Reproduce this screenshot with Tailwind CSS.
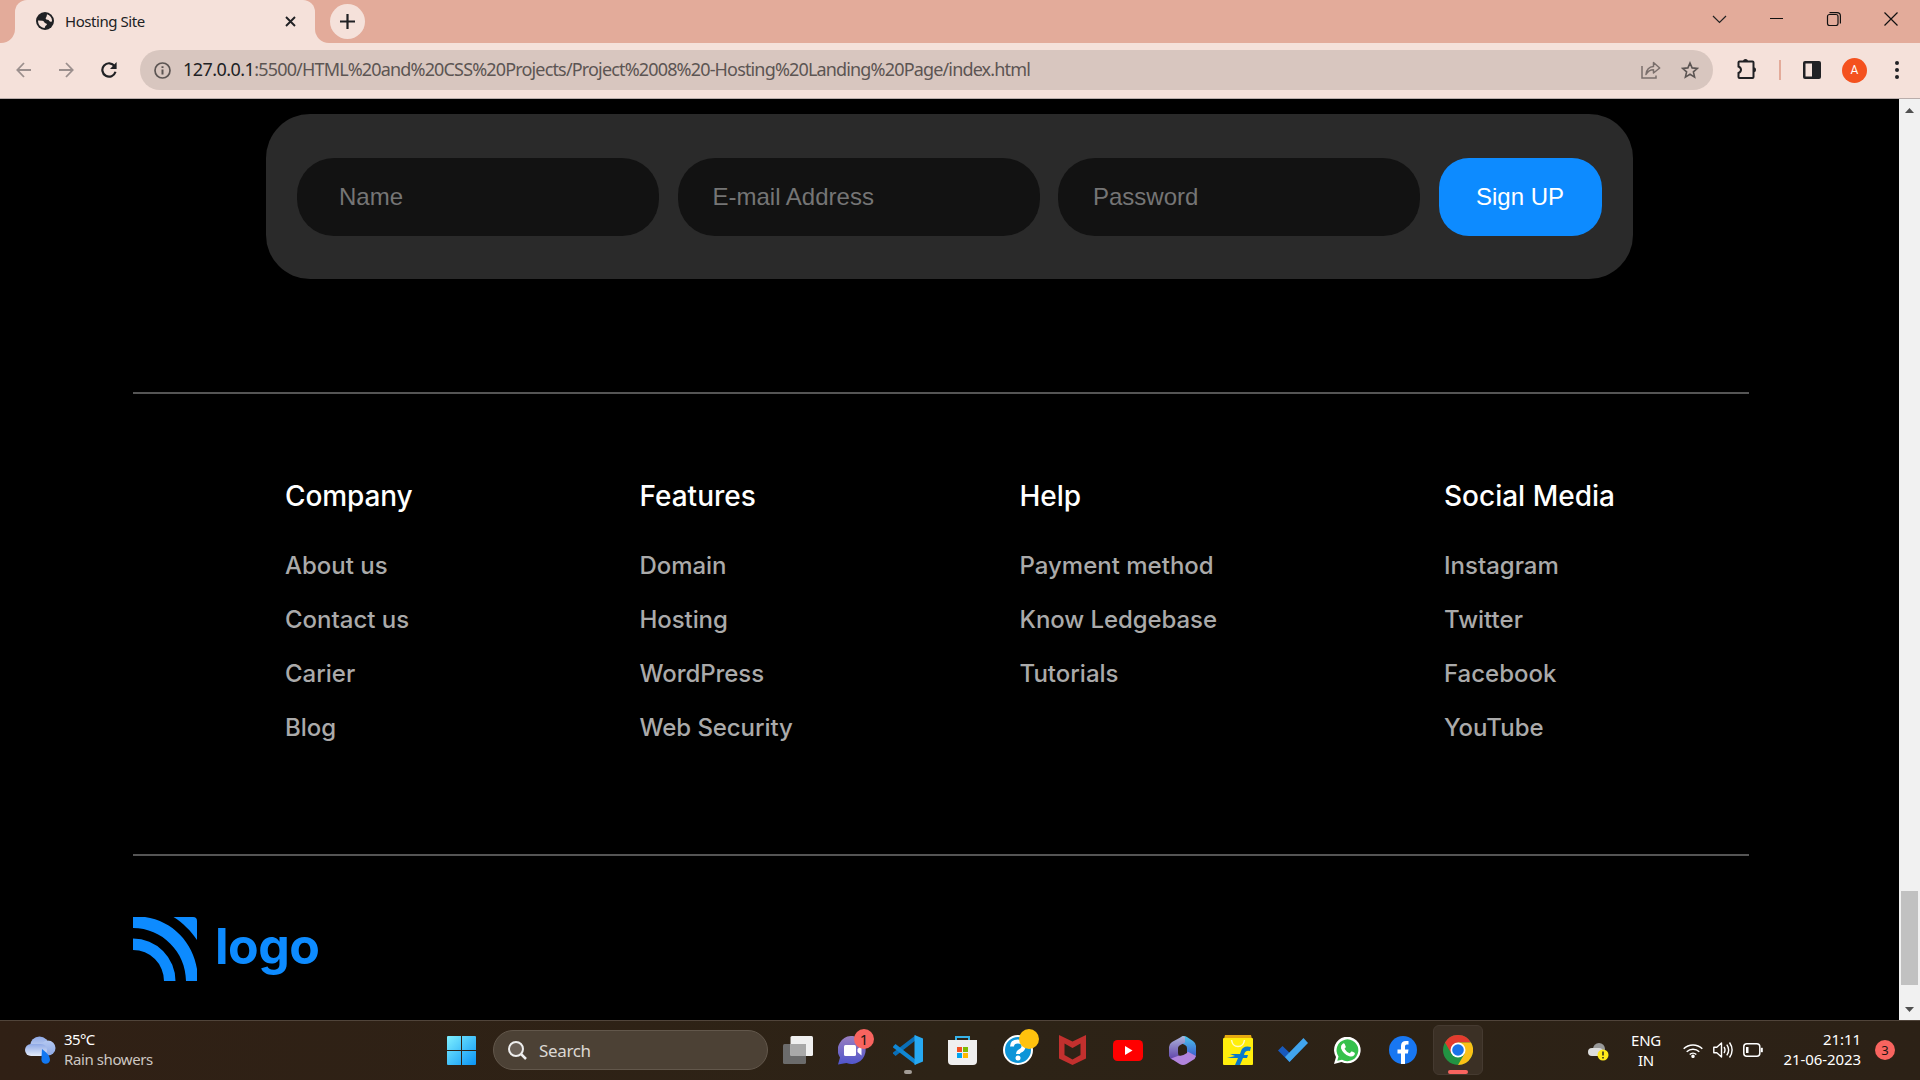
<!DOCTYPE html>
<html lang="en">
<head>
<meta charset="utf-8">
<title>Hosting Site</title>
<script src="https://cdn.jsdelivr.net/npm/@tailwindcss/browser@4"></script>
</head>
<body class="w-[1920px] h-[1080px] overflow-hidden bg-black flex flex-col font-['Noto_Sans',sans-serif]">

<!-- Tab strip -->
<header class="h-[43px] shrink-0 bg-[#e3ab9a] flex items-start">
  <div class="w-[15px] h-[43px] bg-[#f5e1da] shrink-0"><div class="size-full bg-[#e3ab9a] rounded-br-[14px]"></div></div>
  <div class="w-[300px] h-[43px] bg-[#f5e1da] rounded-t-[12px] flex items-center pl-[21px] pr-[19px] shrink-0">
    <svg class="size-[18px] -mt-px" viewBox="0 0 18 18"><circle cx="9" cy="9" r="9" fill="#202124"/><path d="M11 2.200C14 3 16 5.800 16 8.500C16 9.600 15.600 10 14.500 9.800C12.800 9.500 13.500 8 11.500 7.800C9.800 7.700 9.300 6.700 10 5.500C10.600 4.600 10.800 3.800 11 2.200Z" fill="#f5e1da"/><path d="M2 8.500L6.500 8.800C8.500 9 8 10.800 9.500 11.200C11.500 11.500 11.200 13 10 13.500C8.800 14 9.500 15.200 8.500 15.900C4.800 15.700 2 12.700 2 8.500Z" fill="#f5e1da"/></svg>
    <span class="ml-[11px] -mt-px text-[15px] tracking-[-0.450px] text-[#202124] whitespace-nowrap">Hosting Site</span>
    <svg class="ml-auto -mt-px size-[11px]" viewBox="0 0 11 11" stroke="#202124" stroke-width="1.900"><path d="M1 1l9 9M10 1l-9 9"/></svg>
  </div>
  <div class="w-[15px] h-[43px] bg-[#f5e1da] shrink-0"><div class="size-full bg-[#e3ab9a] rounded-bl-[14px]"></div></div>
  <div class="size-[35px] mt-1 rounded-full bg-[#f5e1da] flex items-center justify-center shrink-0">
    <svg class="size-[15px]" viewBox="0 0 15 15" stroke="#202124" stroke-width="2.200"><path d="M7.500 0v15M0 7.500h15"/></svg>
  </div>
  <div class="ml-auto mr-px flex h-[37px] items-center">
    <svg class="w-[57px] h-[14px]" viewBox="0 0 57 14" fill="none" stroke="#222" stroke-width="1.200"><path d="M22 4l6.500 6.500L35 4"/></svg>
    <svg class="w-[57px] h-[14px]" viewBox="0 0 57 14" fill="none" stroke="#111" stroke-width="1"><path d="M22 6.500h13"/></svg>
    <svg class="w-[57px] h-[14px]" viewBox="0 0 57 14" fill="none" stroke="#111" stroke-width="1.200"><rect x="22.500" y="2.500" width="10.500" height="11" rx="2"/><path d="M24.500 .6h7.500q3.400 0 3.400 3.400v7.500"/></svg>
    <svg class="w-[57px] h-[14px]" viewBox="0 0 57 14" fill="none" stroke="#111" stroke-width="1.200"><path d="M22.500 .5l13 13M35.500 .5l-13 13"/></svg>
  </div>
</header>

<!-- Toolbar -->
<nav class="h-[56px] shrink-0 bg-[#f5e1da] border-b border-[#b9adab] flex items-center pl-[16px] pb-px">
  <svg class="w-[15px] h-4" viewBox="0 0 15 16" fill="none" stroke="#9b8f8d" stroke-width="1.800"><path d="M15 8H1.500M8 1L1.300 8L8 15"/></svg>
  <svg class="w-[15px] h-4 ml-[28px]" viewBox="0 0 15 16" fill="none" stroke="#9b8f8d" stroke-width="1.800"><path d="M0 8h13.500M7 1l6.700 7L7 15"/></svg>
  <svg class="size-4 ml-[27px]" viewBox="0 0 16 16" fill="none" stroke="#202124" stroke-width="2.200"><path d="M13.600 4.200A6.700 6.700 0 1 0 14.500 9.800"/><path d="M15.600 0v7H9z" fill="#202124" stroke="none"/></svg>
  <div class="ml-[23px] w-[1573px] h-10 rounded-full bg-[#d8c6bf] flex items-center pl-[14px] pr-[14px]">
    <svg class="size-[17px]" viewBox="0 0 17 17" fill="none" stroke="#5c5553" stroke-width="1.700"><circle cx="8.500" cy="8.500" r="7.500"/><path d="M8.500 7.500v5M8.500 4.200v1.800" stroke-width="2"/></svg>
    <p class="ml-3 -mt-px text-[18px] tracking-[-0.840px] whitespace-nowrap text-[#5c5553]"><span class="text-[#202124] tracking-[-0.550px]">127.0.0.1</span>:5500/HTML%20and%20CSS%20Projects/Project%2008%20-Hosting%20Landing%20Page/index.html</p>
    <svg class="ml-auto w-5 h-[18px]" viewBox="0 0 20 18" fill="none" stroke="#7a6f6c" stroke-width="1.500"><path d="M1 5v12h14v-2.500"/><path d="M5 13.500C5.500 8.500 8 5.800 12.500 5.500V1.500L18.700 7L12.500 12V8.800C9 8.800 7 10 5 13.500Z" stroke-linejoin="round"/></svg>
    <svg class="ml-5 size-[18px]" viewBox="0 0 18 18" fill="none" stroke="#5c5553" stroke-width="1.600"><path d="M9 2l2.100 4.900 5.300.5-4 3.500 1.200 5.200L9 13.300l-4.600 2.800 1.200-5.200-4-3.500 5.300-.5z"/></svg>
  </div>
  <svg class="ml-[23px] mt-[-2px] w-[22px] h-5" viewBox="0 0 22 20" fill="none" stroke="#202124" stroke-width="2"><path d="M3.500 2.500h13q1 0 1 1v14.500q0 1-1 1h-13q-1 0-1-1v-4q2.500-1 2.500-3.200t-2.500-3.300v-4q0-1 1-1z"/><path d="M7 2.500a2.500 2.500 0 0 1 5 0zM17.500 8.300a2.500 2.500 0 0 1 0 5z" fill="#202124" stroke="none"/></svg>
  <div class="ml-[21px] w-0.5 h-5 bg-[#e3ab9a]"></div>
  <svg class="ml-[22px] size-[18px]" viewBox="0 0 18 18"><rect width="18" height="18" rx="2" fill="#202124"/><path d="M2.500 2.500h6.500v13H2.500z" fill="#f5e1da"/></svg>
  <div class="ml-[21px] size-[25px] rounded-full bg-[#f4511e] text-white text-[12px] flex items-center justify-center font-['Roboto',sans-serif]">A</div>
  <svg class="ml-7 w-1 h-[18px]" viewBox="0 0 4 18" fill="#202124"><circle cx="2" cy="2" r="2"/><circle cx="2" cy="9" r="2"/><circle cx="2" cy="16" r="2"/></svg>
</nav>

<div class="flex h-[921px] shrink-0">
  <!-- Page -->
  <main class="w-[1899px] bg-black pt-[15px] font-['Inter',sans-serif]">
    <form class="ml-[266px] w-[1367px] h-[165px] rounded-[44px] bg-[#2a2a2a] pl-[31px] pt-px flex items-center gap-[18.500px] font-['Liberation_Sans',sans-serif] text-[24px]">
      <div class="w-[362px] h-[78px] rounded-[37px] bg-[#121212] text-[#757575] flex items-center pl-[42px]">Name</div>
      <div class="w-[362px] h-[78px] rounded-[37px] bg-[#121212] text-[#757575] flex items-center pl-[35px]">E-mail Address</div>
      <div class="w-[362px] h-[78px] rounded-[37px] bg-[#121212] text-[#757575] flex items-center pl-[35px]">Password</div>
      <button type="button" class="w-[163px] h-[78px] rounded-[30px] bg-[#0d8bff] text-white">Sign UP</button>
    </form>

    <section class="ml-[133px] w-[1616px] mt-[113px] h-[464px] border-y-2 border-[#555] pt-[78px] pl-[152px] grid grid-cols-[354.500px_380px_424.500px_1fr] items-start text-[24px] font-medium text-[#aaa]">
      <div>
        <h3 class="text-[28px] leading-[48px] mb-[19px] text-white tracking-[-0.100px]">Company</h3>
        <ul class="leading-[54px]"><li>About us</li><li>Contact us</li><li>Carier</li><li>Blog</li></ul>
      </div>
      <div>
        <h3 class="text-[28px] leading-[48px] mb-[19px] text-white">Features</h3>
        <ul class="leading-[54px] tracking-[-0.080px]"><li>Domain</li><li>Hosting</li><li>WordPress</li><li>Web Security</li></ul>
      </div>
      <div>
        <h3 class="text-[28px] leading-[48px] mb-[19px] text-white">Help</h3>
        <ul class="leading-[54px]"><li>Payment method</li><li class="tracking-[-0.080px]">Know Ledgebase</li><li>Tutorials</li></ul>
      </div>
      <div>
        <h3 class="text-[28px] leading-[48px] mb-[19px] text-white">Social Media</h3>
        <ul class="leading-[54px]"><li>Instagram</li><li>Twitter</li><li>Facebook</li><li>YouTube</li></ul>
      </div>
    </section>

    <div class="ml-[133px] mt-[61px] flex items-start h-16">
      <svg class="size-16" viewBox="0 0 64 64" fill="#0d8bff"><path d="M0 0h12C40 4 60 26 64 52v12H53C53 35 29 11 0 11z"/><path d="M0 21.500A42.500 42.500 0 0 1 42.500 64H31A31 31 0 0 0 0 33z"/><path d="M40.500 0H60q4 0 4 4v19C58 14 50 6 40.500 0z"/></svg>
      <span class="ml-[18px] mt-px text-[50px] leading-[56px] font-bold tracking-[-0.500px] text-[#0d8bff]">logo</span>
    </div>
  </main>
  <!-- Scrollbar -->
  <aside class="w-[21px] bg-[#f1f1f1] flex flex-col items-center">
    <svg class="w-[9px] h-[5px] mt-[9px]" viewBox="0 0 9 5"><path d="M0 5L4.500 0L9 5z" fill="#505050"/></svg>
    <div class="mt-[778px] w-[17px] h-[94px] bg-[#c1c1c1]"></div>
    <svg class="w-[9px] h-[5px] mt-[22px]" viewBox="0 0 9 5"><path d="M0 0L4.500 5L9 0z" fill="#505050"/></svg>
  </aside>
</div>

<!-- Taskbar -->
<footer class="h-[60px] shrink-0 border-t border-[#50443a] bg-linear-to-r from-[#302015] via-[#2d2316] to-[#2c2116] flex items-center pb-px text-white">
  <div class="w-[434px] flex items-center pl-[25px]">
    <svg class="w-[31px] h-[28px]" viewBox="0 0 31 28"><defs><linearGradient id="cl" x2="0" y2="1"><stop stop-color="#8fa9e6"/><stop offset="1" stop-color="#e4ecfb"/></linearGradient><linearGradient id="cr" x2="0" y2="1"><stop stop-color="#b4c8f2"/><stop offset="1" stop-color="#8ea9e4"/></linearGradient></defs><circle cx="14.500" cy="10" r="9.500" fill="url(#cl)"/><circle cx="23" cy="12" r="7.500" fill="url(#cr)"/><rect y="8" width="22" height="12" rx="6" fill="url(#cl)"/><path d="M17 13q8 6 8 10.500a4.300 4.300 0 0 1-8.600 0z" fill="#1278f2"/></svg>
    <div class="ml-2 -mt-0.5 text-[15px] leading-5 tracking-[-0.600px]"><p>35°C</p><p class="text-[#cdc7c2] tracking-[-0.400px]">Rain showers</p></div>
  </div>
  <div class="w-[55px] flex justify-center">
    <svg class="size-[29px]" viewBox="0 0 29 29"><defs><linearGradient id="win" x2="1" y2="1"><stop stop-color="#7ff0ff"/><stop offset="1" stop-color="#0a94f5"/></linearGradient></defs><path d="M0 1q0-1 1-1h13v14H0zM15 0h13q1 0 1 1v13H15zM0 15h14v14H1q-1 0-1-1zM15 15h14v13q0 1-1 1H15z" fill="url(#win)"/></svg>
  </div>
  <div class="ml-1 mr-[2px] w-[275px] h-10 rounded-full bg-[#4c4135] border border-[#62574b] flex items-center pl-[14px]">
    <svg class="size-[19px]" viewBox="0 0 19 19" fill="none" stroke="#eee"><circle cx="8" cy="8" r="7" stroke-width="2" fill="#6a6057"/><path d="M13 13l5 5" stroke-width="2.500"/></svg>
    <span class="ml-3 mt-px text-[17px] tracking-[-0.350px] text-[#dcd8d4]">Search</span>
  </div>

  <div class="flex w-[715px] h-[50px] items-center">
    <div class="w-[55px] flex justify-center"><svg class="w-[30px] h-7" viewBox="0 0 30 28"><rect y="8" width="23" height="20" rx="1.500" fill="#6b6b6b"/><rect x="7.500" width="22.500" height="20" rx="1.500" fill="#f0f0f0"/><path d="M7.500 8H23v12H7.500z" fill="#a9a9a9"/></svg></div>
    <div class="w-[55px] flex justify-center relative">
      <svg class="size-[29px]" viewBox="0 0 29 29"><defs><linearGradient id="tm" x2="0" y2="1"><stop stop-color="#9a7fc0"/><stop offset="1" stop-color="#4f55cc"/></linearGradient></defs><path d="M14.500 0a14 14 0 1 1-6 27L0 28.500l2-7A14 14 0 0 1 14.500 0z" fill="url(#tm)"/><rect x="6" y="9" width="12" height="11" rx="1.500" fill="#fff"/><path d="M19.500 13l4-3.500v10l-4-3.500z" fill="#fff"/></svg>
      <span class="absolute left-[29px] top-[-7px] size-5 rounded-full bg-[#f8645f] text-[#201512] text-[15px] leading-5 text-center">1</span>
    </div>
    <div class="w-[55px] flex justify-center relative"><svg class="w-[30px] h-[30px]" viewBox="0 0 30 30"><path d="M0 18.500L2.500 21 23 5V0L0 17.500z" fill="#0a6fb8"/><path d="M0 11.500L2.500 9 23 25v5L0 12.500z" fill="#1087d4"/><path d="M21.500 0L30 3.500v23L21.500 30z" fill="#27a9f2"/></svg>
      <span class="absolute top-[35px] left-[24px] w-2 h-1 rounded-full bg-[#a29c96]"></span></div>
    <div class="w-[55px] flex justify-center"><svg class="w-[29px] h-[29px]" viewBox="0 0 29 29"><path d="M8 5V1h13v4" fill="none" stroke="#37b3e9" stroke-width="2"/><path d="M0 4h29v21q0 4-4 4H4q-4 0-4-4z" fill="#efefef"/><path d="M9 11h5v5H9z" fill="#f25022"/><path d="M15 11h5v5h-5z" fill="#7fba00"/><path d="M9 17h5v5H9z" fill="#00a4ef"/><path d="M15 17h5v5h-5z" fill="#ffb900"/></svg></div>
    <div class="w-[55px] flex justify-center relative">
      <svg class="size-[30px]" viewBox="0 0 30 30"><circle cx="15" cy="15" r="14" fill="#0d95d8" stroke="#fff" stroke-width="2"/><path d="M9 11.500Q9 6.500 14.800 6.500T20.500 11.500Q20.500 14.500 17 16Q15 17 15 19" fill="none" stroke="#fff" stroke-width="4"/><circle cx="15" cy="23" r="2.500" fill="#fff"/></svg>
      <span class="absolute left-[29px] top-[-6px] size-5 rounded-full bg-[#ffc20e]"></span>
    </div>
    <div class="w-[55px] flex justify-center"><svg class="w-[27px] h-[30px]" viewBox="0 0 27 30"><path d="M0 0l13.500 6.500L27 0v23.500L13.500 30 0 23.500zM5.500 8.500v11.500l8 4.500 8-4.500V8.500l-8 4.500z" fill="#c2302e" fill-rule="evenodd"/></svg></div>
    <div class="w-[55px] flex justify-center"><svg class="w-[30px] h-[21px]" viewBox="0 0 30 21"><rect width="30" height="21" rx="4.500" fill="#f00"/><path d="M12 6l7.500 4.500L12 15z" fill="#fff"/></svg></div>
    <div class="w-[55px] flex justify-center"><svg class="w-[27px] h-[29px]" viewBox="0 0 27 29"><defs><linearGradient id="ma" x2="0" y2="1"><stop stop-color="#aeb5dc"/><stop offset="1" stop-color="#5d3fa8"/></linearGradient><linearGradient id="mb" x2="0" y2="1"><stop stop-color="#4cc5ee"/><stop offset="1" stop-color="#3b50c9"/></linearGradient></defs><path d="M12 1q3-2 6 0l6 4q3 2 3 5v9q0 2-2 4l-7-6v-5q0-2-2-3l-6-3z" fill="url(#mb)"/><path d="M14 0L3 6Q0 8 0 11v9q1 3 4 4l7-3q-2-1-2-4v-5q0-1.500 1.500-2.500L16 6.500V1z" fill="url(#ma)"/><path d="M2 22.500l8-3q3 1 8-2.500l.5-1.500L27 20l-1.500 3-8 5q-3.500 2-7 0z" fill="#b184dc"/></svg></div>
    <div class="w-[55px] flex justify-center"><svg class="w-[30px] h-[30px]" viewBox="0 0 30 30"><path d="M2 0h26l1 4H1z" fill="#e5a910"/><rect y="3" width="30" height="27" rx="1" fill="#ffee0c"/><path d="M8.500 5q1 6.500 6.500 6.500T21.500 5" fill="none" stroke="#fff9c4" stroke-width="1.500"/><path d="M28 12q-8-2-10 4l-1 3H7l5 2-8 2h11l-3 7h5l3-7h4l1-3h-4q1-5 6-4z" fill="#0879ca"/></svg></div>
    <div class="w-[55px] flex justify-center"><svg class="w-[30px] h-6" viewBox="0 0 30 24"><path d="M0 12.500L4.500 8 16 19l-4.500 5z" fill="#195abd"/><path d="M25.500 0L30 5 11.500 24 7 19z" fill="#41a5ee"/></svg></div>
    <div class="w-[55px] flex justify-center"><svg class="size-[27px]" viewBox="0 0 27 27"><path d="M0 27l2-7A13.300 13.300 0 1 1 7.500 25z" fill="#fff"/><path d="M3.300 23.700l1.200-4.200a10.900 10.900 0 1 1 3.500 3.200z" fill="#35c14c"/><path d="M8.500 7q1.500-1.500 2.300.3l1 2.400q0 .8-1.300 2 2 3.500 5.300 4.600l1.500-1.800q.7-.4 3.300 1.200 1 .8-.7 2.900-1.700 1.600-4.600.7Q9 17 7 11.300q-.5-2.800 1.500-4.300z" fill="#fff"/></svg></div>
    <div class="w-[55px] flex justify-center"><svg class="size-7" viewBox="0 0 28 28"><circle cx="14" cy="14" r="14" fill="#1877f2"/><path d="M12 28V17.500H8.500v-4H12V10q0-5 5-5h2.500v3.500h-1.800q-1.700 0-1.700 1.800v3.200h3.500l-.6 4H16V28z" fill="#fff"/></svg></div>
    <div class="w-[55px] flex justify-center relative">
      <div class="w-[50px] h-[50px] rounded-md bg-[#3b3025] border border-[#453a30] flex items-center justify-center">
        <svg class="size-[30px]" viewBox="0 0 30 30"><circle cx="15" cy="15" r="15" fill="#229342"/><path d="M2 7.500A15 15 0 0 1 28 7.500H15L8.500 18.700z" fill="#e33b2e"/><path d="M28 7.500A15 15 0 0 1 15 30L21.500 18.700 15 7.500z" fill="#fbc116"/><circle cx="15" cy="15" r="7.500" fill="#fff"/><circle cx="15" cy="15" r="5.800" fill="#1a73e8"/></svg>
      </div>
      <span class="absolute bottom-px left-[17.500px] w-5 h-1 rounded-full bg-[#f8645f]"></span>
    </div>
  </div>

  <div class="flex flex-1 items-center justify-end pr-[25px]">
    <svg class="mt-1 w-[21px] h-[18px]" viewBox="0 0 21 18"><circle cx="11" cy="6" r="6" fill="#999"/><rect y="5" width="15" height="8" rx="4" fill="#ddd"/><circle cx="15" cy="12" r="5.500" fill="#ffe81a"/><path d="M15 8.500v4M15 14v1.600" stroke="#222" stroke-width="1.500"/></svg>
    <p class="w-[60px] ml-[7px] text-[15px] leading-5 text-center tracking-[-0.300px]">ENG<br>IN</p>
    <svg class="ml-[7px] w-5 h-[15px]" viewBox="0 0 20 15" fill="none" stroke="#fff" stroke-width="1.500"><path d="M.7 5.800a13 13 0 0 1 18.600 0M3.700 8.800a9 9 0 0 1 12.600 0M6.700 11.500a4.800 4.800 0 0 1 6.600 0"/><circle cx="10" cy="13.300" r="1" fill="#fff"/></svg>
    <svg class="ml-2.5 w-5 h-[18px]" viewBox="0 0 20 18" fill="none" stroke="#fff" stroke-width="1.400"><path d="M.8 6.200h3L8.500 2v14L3.800 11.800h-3z" stroke-linejoin="round"/><path d="M11 6q2 3 0 6M13.800 3.700q3.700 5.300 0 10.600M16.500 1.500q5.200 7.500 0 15"/></svg>
    <svg class="ml-2.5 w-5 h-[14px]" viewBox="0 0 20 14" fill="none" stroke="#fff" stroke-width="1.500"><rect x=".8" y=".8" width="16" height="12.400" rx="3"/><path d="M3 4h2.500v6H3z" fill="#fff" stroke="none"/><path d="M18.800 4.800v4.400" stroke-width="2"/></svg>
    <p class="w-[98px] -mt-0.5 text-right text-[15px] leading-5 tracking-[-0.080px]">21:11<br>21-06-2023</p>
    <span class="ml-3.5 size-5 rounded-full bg-[#f8645f] text-[#201512] text-[13px] leading-5 text-center">3</span>
  </div>
</footer>
</body>
</html>
